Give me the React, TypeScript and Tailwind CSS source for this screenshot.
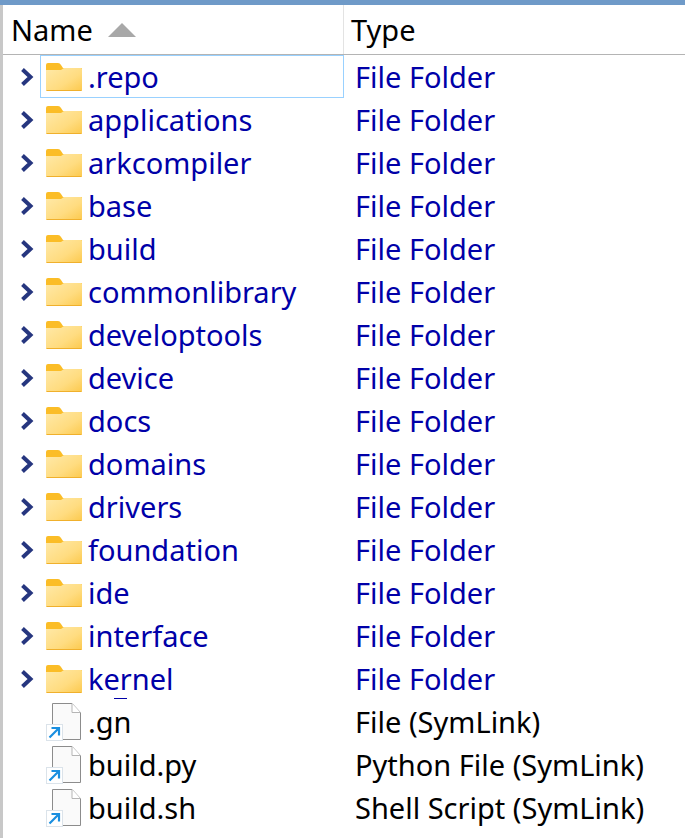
import React from 'react';

const folders = ['.repo', 'applications', 'arkcompiler', 'base', 'build', 'commonlibrary', 'developtools', 'device', 'docs', 'domains', 'drivers', 'foundation', 'ide', 'interface', 'kernel'];

const files = [
  { name: '.gn', type: 'File (SymLink)' },
  { name: 'build.py', type: 'Python File (SymLink)' },
  { name: 'build.sh', type: 'Shell Script (SymLink)' },
];

const Chevron = () => (
  <svg width="15" height="20" viewBox="0 0 15 20" className="shrink-0">
    <path d="M2.5 2.5 L10.5 10 L2.5 17.5" fill="none" stroke="#26367f" strokeWidth="4" />
  </svg>
);

const FolderIcon = () => (
  <svg width="36" height="28" viewBox="0 0 36 28" className="shrink-0">
    <defs>
      <linearGradient id="folderBody" x1="0" y1="0" x2="1" y2="1">
        <stop offset="0" stopColor="#ffe9a8" />
        <stop offset="0.6" stopColor="#ffdc80" />
        <stop offset="1" stopColor="#fcc94d" />
      </linearGradient>
    </defs>
    <path d="M0 2 Q0 0 2 0 H12 Q14 0 15 2 L17 5 H36 V10 H0 Z" fill="#fbbd27" />
    <path d="M0 7 H15 L18 5 H35 Q36 5 36 6 V27 Q36 28 35 28 H1 Q0 28 0 27 Z" fill="url(#folderBody)" />
    <path d="M0.5 27.5 H35.5" stroke="#f0b02c" strokeWidth="1" />
  </svg>
);

const FileIcon = () => (
  <div className="relative w-[36px] h-[38px] shrink-0">
    <svg width="36" height="38" viewBox="0 0 36 38" className="block">
      <path d="M6.5 0.5 H26 L34.5 9.5 V36.5 H6.5 Z" fill="#fafafa" stroke="#8c8c8c" strokeWidth="1" />
      <path d="M26 0.5 V9.5 H34.5" fill="#ffffff" stroke="#b5b5b5" strokeWidth="1" />
    </svg>
    <div className="absolute left-0 bottom-0 w-[17px] h-[17px] bg-white border border-[#dbe3ea] flex items-center justify-center">
      <svg width="13" height="13" viewBox="0 0 13 13">
        <path d="M1.5 11.5 L10 3 M3.5 2 H11 V9.5" fill="none" stroke="#1a8fe0" strokeWidth="2.2" />
      </svg>
    </div>
  </div>
);

const Row = ({ name, type, folder, selected }: { name: string; type: string; folder: boolean; selected?: boolean }) => (
  <div className="flex h-[43px] items-center text-[29px] leading-none">
    <div className="w-[40px] flex justify-end pr-[5px] shrink-0">
      {folder && <Chevron />}
    </div>
    <div className={`w-[304px] h-[43px] flex items-center gap-[6px] pl-[5px] border ${selected ? 'border-[#99d1ff]' : 'border-transparent'}`}>
      {folder ? <FolderIcon /> : <FileIcon />}
      <span className={`relative ${folder ? 'text-[#0000a8]' : 'text-black'}`}>
        {name}
        {name === 'kernel' && <span className="absolute left-[26px] top-[34px] w-[13px] h-[1px] bg-[#0000a8]" />}
      </span>
    </div>
    <div className={`pl-[11px] whitespace-nowrap ${folder ? 'text-[#0000a8]' : 'text-black'}`}>{type}</div>
  </div>
);

export default function App() {
  return (
    <div className="w-[685px] h-[838px] overflow-hidden bg-white font-['Noto_Sans',sans-serif]">
      <div className="h-[5px] bg-[#6f9ac8]" />
      <div className="flex h-[838px] border-l-[3px] border-[#c8c8c8]">
        <div className="flex-1 -ml-[3px] pl-[3px]">
          <div className="flex h-[50px] border-b border-[#b4b4b4] text-[29px] text-black items-center leading-none">
            <div className="w-[341px] h-full flex items-center pl-[8px] gap-[15px] border-r border-[#e3e3e3]">
              <span>Name</span>
              <svg width="28" height="14" viewBox="0 0 28 14">
                <path d="M14 0 L28 14 H0 Z" fill="#a8a8a8" />
              </svg>
            </div>
            <div className="pl-[7px]">Type</div>
          </div>
          <div className="-ml-[3px]">
            {folders.map((f, i) => (
              <Row key={f} name={f} type="File Folder" folder selected={i === 0} />
            ))}
            {files.map((f) => (
              <Row key={f.name} name={f.name} type={f.type} folder={false} />
            ))}
          </div>
        </div>
      </div>
    </div>
  );
}
